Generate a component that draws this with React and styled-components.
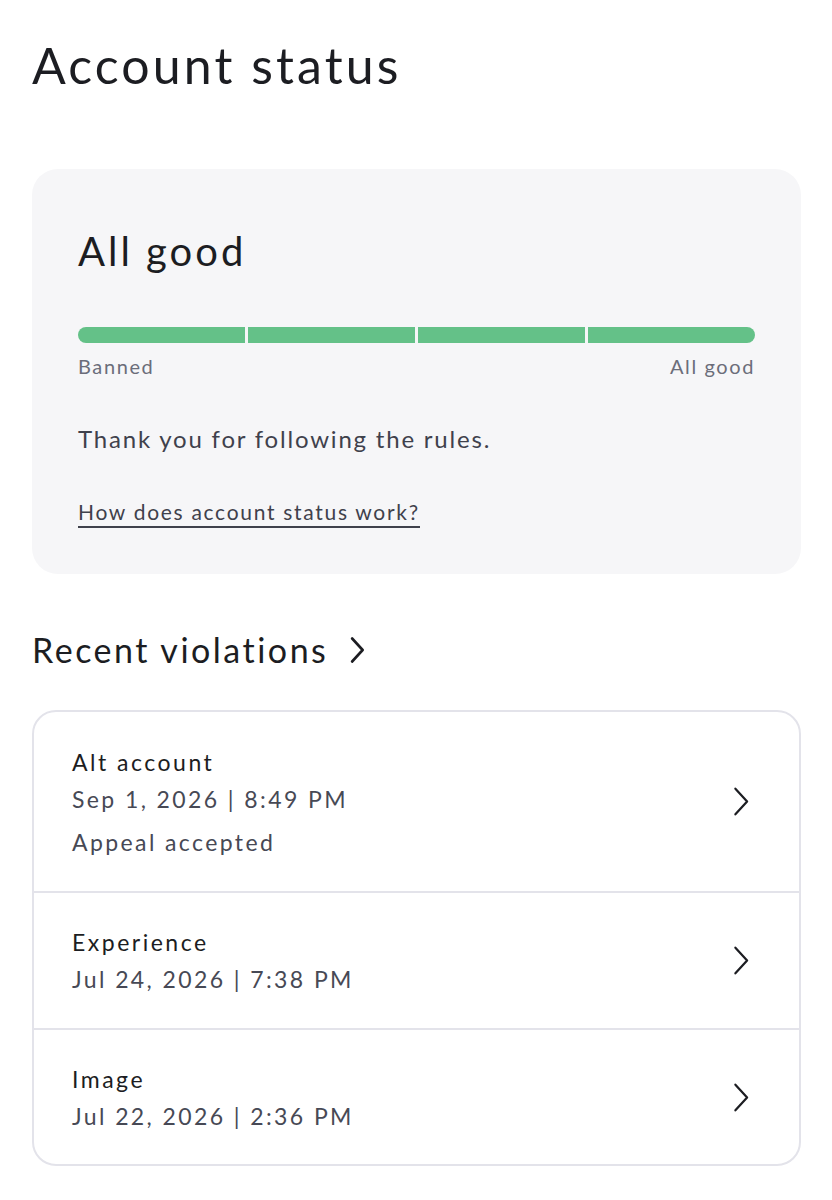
import React from "react";
import styled, { createGlobalStyle } from "styled-components";

const GlobalStyle = createGlobalStyle`
  body {
    margin: 0;
    background: #ffffff;
    font-family: Lato, "Noto Sans", sans-serif;
    color: #1c1d22;
  }
`;

const Page = styled.div`
  width: 832px;
  padding: 35px 31px 40px 32px;
  box-sizing: border-box;
`;

const PageTitle = styled.h1`
  margin: 0;
  font-size: 50px;
  font-weight: 400;
  line-height: 60px;
  letter-spacing: 3.1px;
  color: #1c1d22;
`;

const StatusCard = styled.section`
  margin-top: 74px;
  background: #f6f6f8;
  border-radius: 26px;
  padding: 58px 46px 46px 46px;
`;

const StatusTitle = styled.h2`
  margin: 0;
  font-size: 40px;
  font-weight: 400;
  line-height: 48px;
  letter-spacing: 3px;
  color: #1c1d22;
`;

const Meter = styled.div`
  margin-top: 52px;
  display: grid;
  grid-template-columns: repeat(4, 1fr);
  gap: 3px;
`;

const Segment = styled.div`
  height: 16px;
  background: #64c188;
  border-radius: ${(p) =>
    p.first ? "8px 0 0 8px" : p.last ? "0 8px 8px 0" : "0"};
`;

const MeterLabels = styled.div`
  margin-top: 10px;
  display: flex;
  justify-content: space-between;
  font-size: 20px;
  line-height: 26px;
  color: #6b6d7a;
  letter-spacing: 1.6px;
`;

const Message = styled.p`
  margin: 45px 0 0;
  font-size: 24px;
  line-height: 30px;
  color: #3f414c;
  letter-spacing: 1.8px;
`;

const HelpLink = styled.a`
  display: inline-block;
  margin-top: 44px;
  font-size: 21px;
  line-height: 28px;
  color: #3f414c;
  text-decoration: none;
  border-bottom: 2px solid #3f414c;
  letter-spacing: 1.7px;
`;

const SectionHeader = styled.div`
  margin-top: 54px;
  display: flex;
  align-items: center;
  gap: 22px;
`;

const SectionTitle = styled.h2`
  margin: 0;
  font-size: 34px;
  font-weight: 400;
  line-height: 44px;
  color: #1c1d22;
  letter-spacing: 2.5px;
`;

const List = styled.ul`
  list-style: none;
  margin: 38px 0 0;
  padding: 0;
  border: 2px solid #e3e3ea;
  border-radius: 24px;
  overflow: hidden;
`;

const Row = styled.li`
  display: flex;
  align-items: center;
  padding: 0 50px 0 38px;
  height: ${(p) => p.h}px;
  & + & {
    border-top: 2px solid #e3e3ea;
  }
`;

const RowText = styled.div`
  flex: 1;
  display: flex;
  flex-direction: column;
  gap: 7px;
`;

const RowTitle = styled.div`
  font-size: 23px;
  line-height: 30px;
  color: #1c1d22;
  letter-spacing: 2.5px;
`;

const RowMeta = styled.div`
  font-size: 23px;
  line-height: 30px;
  color: #474955;
  letter-spacing: 2.4px;
  margin-top: ${(p) => (p.note ? "6px" : "0")};
`;

const Chevron = ({ size = 28, color = "#1c1d22", width = 2 }) => (
  <svg width={size * 0.55} height={size} viewBox="0 0 14 26" fill="none">
    <path
      d="M2 1.5 L12.5 13 L2 24.5"
      stroke={color}
      strokeWidth={width}
      strokeLinecap="round"
      strokeLinejoin="round"
    />
  </svg>
);

const violations = [
  {
    title: "Alt account",
    date: "Sep 1, 2026 | 8:49 PM",
    note: "Appeal accepted",
    h: 179,
  },
  { title: "Experience", date: "Jul 24, 2026 | 7:38 PM", h: 135 },
  { title: "Image", date: "Jul 22, 2026 | 2:36 PM", h: 134 },
];

export default function App() {
  return (
    <>
      <GlobalStyle />
      <Page>
        <PageTitle>Account status</PageTitle>
        <StatusCard>
          <StatusTitle>All good</StatusTitle>
          <Meter>
            <Segment first />
            <Segment />
            <Segment />
            <Segment last />
          </Meter>
          <MeterLabels>
            <span>Banned</span>
            <span>All good</span>
          </MeterLabels>
          <Message>Thank you for following the rules.</Message>
          <HelpLink href="#">How does account status work?</HelpLink>
        </StatusCard>
        <SectionHeader>
          <SectionTitle>Recent violations</SectionTitle>
          <Chevron size={26} width={2.6} />
        </SectionHeader>
        <List>
          {violations.map((v) => (
            <Row key={v.title} h={v.h}>
              <RowText>
                <RowTitle>{v.title}</RowTitle>
                <RowMeta>{v.date}</RowMeta>
                {v.note && <RowMeta note>{v.note}</RowMeta>}
              </RowText>
              <Chevron size={29} width={2} />
            </Row>
          ))}
        </List>
      </Page>
    </>
  );
}
